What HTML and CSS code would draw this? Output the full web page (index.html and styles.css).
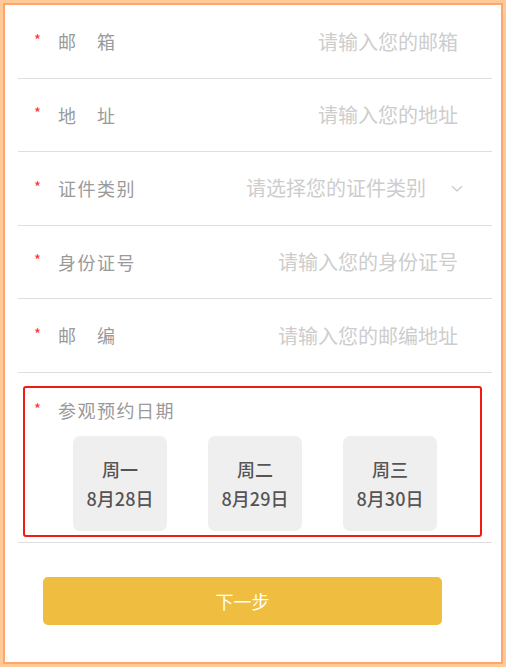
FILE: index.html
```html
<!DOCTYPE html>
<html lang="zh-CN">
<head>
<meta charset="utf-8">
<title>预约参观</title>
<link rel="stylesheet" href="styles.css">
</head>
<body>
<div class="frame">
  <form class="form">
    <div class="row">
      <span class="star">*</span>
      <span class="label">邮　箱</span>
      <input class="field" type="text" placeholder="请输入您的邮箱">
    </div>
    <div class="row">
      <span class="star">*</span>
      <span class="label">地　址</span>
      <input class="field" type="text" placeholder="请输入您的地址">
    </div>
    <div class="row">
      <span class="star">*</span>
      <span class="label">证件类别</span>
      <span class="select">请选择您的证件类别</span>
      <svg class="chev" width="12" height="8" viewBox="0 0 12 8"><path d="M1 1.2 L6 6 L11 1.2" fill="none" stroke="#c8c8c8" stroke-width="1.2"/></svg>
    </div>
    <div class="row">
      <span class="star">*</span>
      <span class="label">身份证号</span>
      <input class="field" type="text" placeholder="请输入您的身份证号">
    </div>
    <div class="row">
      <span class="star">*</span>
      <span class="label">邮　编</span>
      <input class="field" type="text" placeholder="请输入您的邮编地址">
    </div>
    <div class="date-row">
      <div class="highlight">
        <div class="date-head">
          <span class="star">*</span>
          <span class="label">参观预约日期</span>
        </div>
        <div class="days">
          <div class="day"><span>周一</span><span>8月28日</span></div>
          <div class="day"><span>周二</span><span>8月29日</span></div>
          <div class="day"><span>周三</span><span>8月30日</span></div>
        </div>
      </div>
    </div>
    <button class="next" type="button">下一步</button>
  </form>
</div>
</body>
</html>
```
FILE: styles.css
```css
html, body {
  margin: 0;
  padding: 0;
  background: #fff;
}
body {
  font-family: "Noto Sans CJK SC", "Noto Sans", sans-serif;
}
.frame {
  box-sizing: border-box;
  width: 506px;
  height: 667px;
  border: 3px solid #ffc998;
  box-shadow: inset 0 0 0 2px #ffa66d;
  background: #fff;
  overflow: hidden;
}
.form {
  margin: 0;
  padding: 2px 11px 0 15px;
}
.row {
  height: 72.5px;
  border-bottom: 1px solid #dedede;
  display: flex;
  align-items: center;
  padding-left: 16px;
  padding-right: 34px;
}
.star {
  color: #f33;
  font-size: 15px;
  line-height: 15px;
  width: 24px;
  margin-bottom: 4px;
  flex: none;
}
.label {
  color: #9a9a9a;
  font-size: 18px;
  line-height: 24px;
  letter-spacing: 1.5px;
  flex: none;
}
.field {
  flex: 1;
  min-width: 0;
  border: none;
  outline: none;
  background: transparent;
  text-align: right;
  font-family: inherit;
  font-size: 20px;
  color: #333;
  padding: 0;
}
.field::placeholder {
  color: #cdcdcd;
}
.select {
  flex: 1;
  text-align: right;
  font-size: 20px;
  color: #cdcdcd;
  line-height: 26px;
}
.chev {
  flex: none;
  margin-left: 25px;
  margin-right: -5px;
  margin-top: 2px;
}
.date-row {
  border-bottom: 1px solid #dedede;
  padding: 13.5px 10px 5px 5px;
}
.highlight {
  border: 2px solid #f21b12;
  border-radius: 3px;
  padding: 10px 0 4px 9px;
}
.date-head {
  display: flex;
  align-items: center;
}
.days {
  display: flex;
  gap: 41px;
  padding-left: 39px;
  margin-top: 14px;
}
.day {
  width: 94px;
  height: 95px;
  border-radius: 7px;
  background: #efefef;
  display: flex;
  flex-direction: column;
  align-items: center;
  justify-content: center;
  color: #555;
  font-size: 18px;
  font-weight: 500;
  line-height: 29px;
}
.next {
  display: block;
  margin: 34px 0 0 25px;
  width: 399px;
  height: 48px;
  border: none;
  border-radius: 5px;
  background: #efbd40;
  color: #fff;
  font-family: inherit;
  font-size: 18px;
  padding: 0;
}
```
